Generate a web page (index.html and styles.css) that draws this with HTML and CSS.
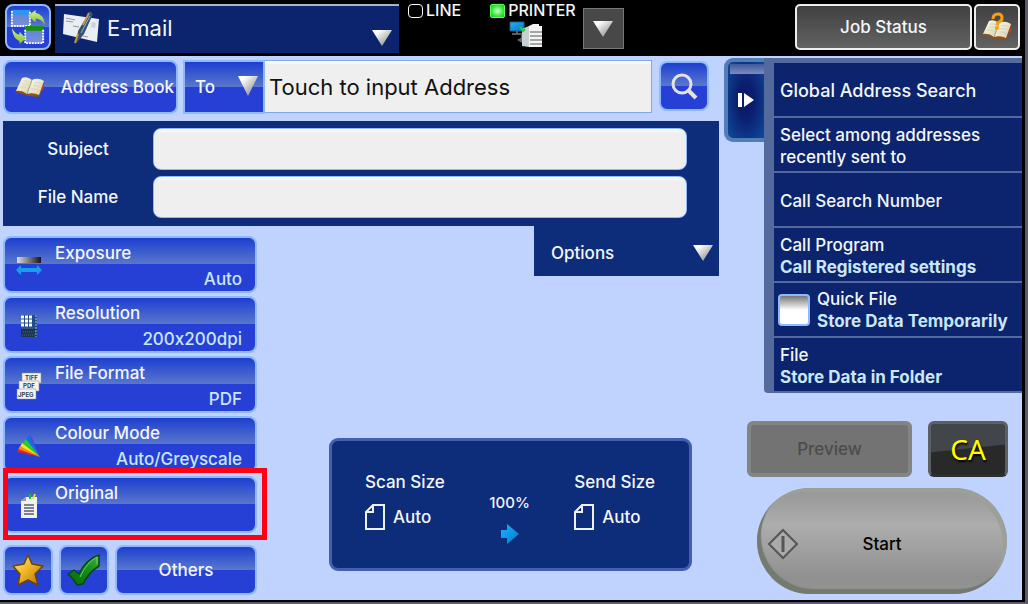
FILE: index.html
```html
<!DOCTYPE html>
<html lang="en">
<head>
    <meta charset="UTF-8">
    <meta name="viewport" content="width=device-width, initial-scale=1.0">
    <title>E-mail</title>
    <link rel="stylesheet" href="styles.css">
</head>
<body>

    <!-- Shared shapes -->
    <svg class="defs" width="0" height="0" aria-hidden="true">
        <defs>
            <linearGradient id="silver" x1="0" y1="0" x2="1" y2="1">
                <stop offset="0.2" stop-color="#fff"/>
                <stop offset="0.8" stop-color="#999"/>
            </linearGradient>
            <linearGradient id="paper" x1="0" y1="0" x2="1" y2="1">
                <stop offset="0" stop-color="#fffef0"/>
                <stop offset="1" stop-color="#d4ceaa"/>
            </linearGradient>
            <linearGradient id="cyan" x1="0" y1="0" x2="1" y2="1">
                <stop offset="0" stop-color="#19b4ff"/>
                <stop offset="1" stop-color="#0678cc"/>
            </linearGradient>
            <linearGradient id="leaf" x1="0" y1="0" x2="0" y2="1">
                <stop offset="0" stop-color="#d8f08a"/>
                <stop offset="1" stop-color="#7cc436"/>
            </linearGradient>
            <linearGradient id="gold" x1="0" y1="0" x2="1" y2="1">
                <stop offset="0" stop-color="#ffe9a0"/>
                <stop offset="0.45" stop-color="#f3b928"/>
                <stop offset="1" stop-color="#b06c00"/>
            </linearGradient>
            <linearGradient id="green" x1="1" y1="0" x2="0" y2="1">
                <stop offset="0" stop-color="#3fb53f"/>
                <stop offset="0.4" stop-color="#12901c"/>
                <stop offset="1" stop-color="#07660d"/>
            </linearGradient>
            <linearGradient id="ramp" x1="0" y1="0" x2="1" y2="0">
                <stop offset="0" stop-color="#ddd"/>
                <stop offset="1" stop-color="#151515"/>
            </linearGradient>
            <linearGradient id="glass" x1="0" y1="0" x2="0" y2="1">
                <stop offset="0" stop-color="#5a83dc"/>
                <stop offset="1" stop-color="#7b8fd6"/>
            </linearGradient>
            <symbol id="arrow-down" viewBox="0 0 20 16">
                <path d="M0 0H20L10 16Z" fill="url(#silver)"/>
            </symbol>
            <symbol id="book" viewBox="0 0 30 20">
                <path d="M1 13L0 15L14 19L24 20L29 9V5Z" fill="#8b501b"/>
                <path d="M7 1Q12 -1 17 3L12 17Q7 13 1 14Z" fill="url(#paper)"/>
                <path d="M17 3Q23 0 29 4L24 18Q18 15 12 17Z" fill="url(#paper)"/>
                <path d="M8 4Q12 3 15 6M7 7Q11 6 14 9M5 10Q9 9 13 12M19 6Q23 4 27 7M18 9Q22 7 26 10M16 12Q20 11 25 14" fill="none" stroke="#d3cfb4" stroke-width="0.7"/>
                <path d="M17 3L12 17" stroke="#aaa482"/>
                <path d="M27 13L29 8" stroke="#d03a22" stroke-width="1.5"/>
            </symbol>
            <symbol id="sheet" viewBox="0 0 20 26">
                <path d="M1 8V25H19V1H8Z M8 1V8H1" fill="none" stroke="#f1f1ec" stroke-width="2"/>
            </symbol>
        </defs>
    </svg>

    <!-- Top bar -->
    <header class="topbar">
        <button class="btn btn-swap" type="button" aria-label="Switch mode">
            <svg width="36" height="36" viewBox="0 0 38 38">
                <path d="M2 2H21V18H2Z" fill="url(#glass)"/>
                <path d="M2 1H21V6H2Z" fill="#2f96ee"/>
                <path d="M2 2V18H21V2" fill="none" stroke="#fff" stroke-width="2" stroke-dasharray="2 1"/>
                <path d="M16 19H35V36H16Z" fill="url(#glass)"/>
                <path d="M16 18H35V23H16Z" fill="#15910e"/>
                <path d="M16 22V36H35V21" fill="none" stroke="#fff" stroke-width="2" stroke-dasharray="2 1"/>
                <path d="M19 7L27 1V4Q36 6 37 17Q33 10 27 10V14Z" fill="url(#leaf)"/>
                <path d="M17 31L10 37V34Q3 31 2 20Q6 27 10 27V24Z" fill="url(#leaf)"/>
            </svg>
        </button>
        <div class="mode">
            <svg class="mode-icon" width="38" height="36" viewBox="0 0 38 36">
                <path d="M2 4L37 9L35 32L1 24Z" fill="#e9edf4"/>
                <path d="M4 8L13 10M4 11L11 12M11 16L17 17M21 26L26 27" stroke="#999" stroke-width="1"/>
                <path d="M30 12L34 13L33 18L29 17Z" fill="#cdd3de"/>
                <path d="M28 1L31 4L22 24L14 34L16 21Z" fill="#34516f"/>
                <path d="M27 3L21 15M16 24L13 33" stroke="#c79a4a" stroke-width="2"/>
                <path d="M28 6L19 23" stroke="#9cb3c6" stroke-width="1"/>
            </svg>
            <select class="mode-select" aria-label="Mode">
                <option>E-mail</option>
            </select>
            <svg class="mode-arrow" width="20" height="16"><use href="#arrow-down"/></svg>
        </div>
        <div class="status">
            <div class="status-leds">
                <span class="led"></span>LINE
                <span class="led led-on"></span>PRINTER
            </div>
            <svg class="status-icon" width="34" height="27" viewBox="0 0 34 27">
                <path d="M1 1H15V10H1Z" fill="url(#cyan)" stroke="#315b79"/>
                <path d="M8 10V13M3 13H13M13 14V20" stroke="#777" stroke-width="1.5"/>
                <path d="M8 19L15 15V23Z" fill="#666"/>
                <path d="M13 8L20 5V26L13 25Z" fill="#c9d0d4"/>
                <path d="M11 6L14 10L16 8" fill="none" stroke="#1ed626" stroke-width="2"/>
                <path d="M20 5L24 3H30V5H33V26H20Z" fill="#f4f4f4"/>
                <path d="M21 11H33M21 15H33M21 19H33M21 23H33" stroke="#555" stroke-width="1"/>
            </svg>
        </div>
        <button class="btn-status-more" type="button" aria-label="Status details">
            <svg width="20" height="16"><use href="#arrow-down"/></svg>
        </button>
        <button class="btn-dark job-status" type="button">Job Status</button>
        <button class="btn-dark help" type="button" aria-label="Help">
            <svg width="32" height="30" viewBox="0 0 32 30">
                <use href="#book" x="1" y="8" width="30" height="20"/>
                <path d="M12 7Q12 2 17 2Q21 2 21 6Q21 9 18 10Q16 11 16 13" fill="none" stroke="#f5a013" stroke-width="3"/>
                <circle cx="16" cy="16" r="2" fill="#f5a013"/>
            </svg>
        </button>
    </header>

    <main class="screen">

        <!-- Send form and scan settings -->
        <section class="send">
            <div class="address-row">
                <button class="btn address-book" type="button">
                    <svg width="30" height="20"><use href="#book"/></svg>
                    Address Book
                </button>
                <div class="address">
                    <div class="to">
                        <select class="btn to-select" aria-label="Recipient type">
                            <option>To</option>
                        </select>
                        <svg class="to-arrow" width="20" height="20" viewBox="0 0 20 20"><path d="M0 0H20L10 20Z" fill="url(#silver)"/></svg>
                    </div>
                    <input class="address-input" type="text" placeholder="Touch to input Address" aria-label="Address">
                </div>
                <button class="btn search" type="button" aria-label="Search">
                    <svg width="28" height="28" viewBox="0 0 28 28" fill="none" stroke="#e2e2e2">
                        <circle cx="12" cy="12" r="9" stroke-width="3"/>
                        <path d="M18 18L26 26" stroke-width="4"/>
                    </svg>
                </button>
            </div>

            <div class="fields">
                <label for="subject">Subject</label>
                <input id="subject" type="text">
                <label for="filename">File Name</label>
                <input id="filename" type="text">
            </div>

            <div class="lower">
                <div class="settings">
                    <button class="btn setting" type="button">
                        <svg width="26" height="20" viewBox="0 0 26 20">
                            <path d="M1 1H25V7H1Z" fill="url(#ramp)"/>
                            <path d="M0 14L5 9V12H21V9L26 14L21 19V16H5V19Z" fill="#16a0ec"/>
                        </svg>
                        <span class="setting-name">Exposure</span>
                        <span class="setting-value">Auto</span>
                    </button>
                    <button class="btn setting" type="button">
                        <svg width="26" height="24" viewBox="0 0 26 24">
                            <path d="M5 1H21V23H5Z" fill="#244c8b"/>
                            <path d="M5 15H21V23H5Z" fill="#1d344d"/>
                            <path d="M5 3H17M5 7H17M5 11H17" stroke="#fff" stroke-width="3" stroke-dasharray="3 1"/>
                            <path d="M6 14H18M7 18H20M6 21H20" stroke="#3f6c90" stroke-dasharray="1 1"/>
                            <path d="M20 1V23" stroke="#8fbdf2" stroke-dasharray="2 1"/>
                        </svg>
                        <span class="setting-name">Resolution</span>
                        <span class="setting-value">200x200dpi</span>
                    </button>
                    <button class="btn setting" type="button">
                        <svg width="26" height="28" viewBox="0 0 26 28">
                            <g fill="#f4f4ec" stroke="#8291a0" stroke-width="0.5">
                                <path d="M6 1H25V11H6Z"/><path d="M3 9H23V19H3Z"/><path d="M1 17H20V27H1Z"/>
                            </g>
                            <g class="format-text">
                                <text x="9" y="8">TIFF</text><text x="7" y="16">PDF</text><text x="2" y="25">JPEG</text>
                            </g>
                        </svg>
                        <span class="setting-name">File Format</span>
                        <span class="setting-value">PDF</span>
                    </button>
                    <button class="btn setting" type="button">
                        <svg width="26" height="24" viewBox="0 0 26 24">
                            <path d="M13 1L16 4L24 23Z" fill="#6d28e0"/>
                            <path d="M13 1L24 23L9 7Z" fill="#0f6ee8"/>
                            <path d="M10 5L24 23L6 10Z" fill="#26c935"/>
                            <path d="M6 9L24 23L4 13Z" fill="#f5e51c"/>
                            <path d="M4 12L24 23L2 16Z" fill="#f58a14"/>
                            <path d="M2 15L24 23L1 18Z" fill="#e02128"/>
                        </svg>
                        <span class="setting-name">Colour Mode</span>
                        <span class="setting-value">Auto/Greyscale</span>
                    </button>
                    <div class="highlighted">
                        <button class="btn setting" type="button">
                            <svg width="26" height="26" viewBox="0 0 26 26">
                                <path d="M5 8L10 4H21V25H5Z" fill="#f1f1ef"/>
                                <path d="M5 8H10V4Z" fill="#999"/>
                                <path d="M8 12H18M8 15H18M8 18H18M8 21H18" stroke="#555f6c" stroke-width="1.5"/>
                                <path d="M14 1V6" stroke="#17c322" stroke-width="2"/>
                                <path d="M19 1L17 6" stroke="#eae021" stroke-width="2"/>
                            </svg>
                            <span class="setting-name">Original</span>
                        </button>
                    </div>
                    <div class="shortcuts">
                        <button class="btn shortcut" type="button" aria-label="Favourites">
                            <svg width="32" height="34" viewBox="0 0 32 34"><path d="M16 2L20 11L31 13L23 21L26 32L16 27L6 32L8 21L1 13L12 11Z" fill="url(#gold)" stroke="#6b4508" stroke-width="1.5" stroke-linejoin="round"/></svg>
                        </button>
                        <button class="btn shortcut" type="button" aria-label="Confirm settings">
                            <svg width="34" height="34" viewBox="0 0 34 34"><path d="M1 21L7 17L12 21Q19 6 32 2V13Q22 19 16 31L10 32Q6 25 1 21Z" fill="url(#green)" stroke="#07480c" stroke-width="1.5" stroke-linejoin="round"/><path d="M13 24Q20 9 30 4V11" fill="none" stroke="#6fce6f" stroke-width="1"/></svg>
                        </button>
                        <button class="btn others" type="button">Others</button>
                    </div>
                </div>

                <div class="middle">
                    <button class="options" type="button" aria-expanded="false">
                        Options
                        <svg width="20" height="16"><use href="#arrow-down"/></svg>
                    </button>
                    <div class="sizes">
                        <div class="size">
                            <span>Scan Size</span>
                            <span class="size-value"><svg width="20" height="26"><use href="#sheet"/></svg>Auto</span>
                        </div>
                        <div class="ratio">
                            <span>100%</span>
                            <svg width="18" height="20" viewBox="0 0 18 20"><path d="M0 6H6V0L18 10L6 20V14H0Z" fill="url(#cyan)"/></svg>
                        </div>
                        <div class="size">
                            <span>Send Size</span>
                            <span class="size-value"><svg width="20" height="26"><use href="#sheet"/></svg>Auto</span>
                        </div>
                    </div>
                </div>
            </div>
        </section>

        <!-- Action drawer and start keys -->
        <aside class="side">
            <div class="drawer">
                <button class="handle" type="button" aria-label="Collapse">
                    <svg width="16" height="14" viewBox="0 0 16 14" fill="#fff"><path d="M0 0H4V14H0ZM6 0L16 7L6 14Z"/></svg>
                </button>
                <ul class="actions">
                    <li><button class="action action-main" type="button">Global Address Search</button></li>
                    <li><button class="action" type="button">Select among addresses recently sent to</button></li>
                    <li><button class="action" type="button">Call Search Number</button></li>
                    <li><button class="action" type="button">Call Program<small>Call Registered settings</small></button></li>
                    <li>
                        <label class="action action-check">
                            <input type="checkbox">
                            <span>Quick File<small>Store Data Temporarily</small></span>
                        </label>
                    </li>
                    <li><button class="action" type="button">File<small>Store Data in Folder</small></button></li>
                </ul>
            </div>
            <div class="keys">
                <div class="keys-row">
                    <button class="preview" type="button" disabled>Preview</button>
                    <button class="clear" type="button">CA</button>
                </div>
                <button class="start" type="button">
                    <svg width="32" height="32" viewBox="0 0 32 32" fill="none" stroke="#555">
                        <path d="M16 2L30 16L16 30L2 16Z" fill="#aaa" stroke-width="2"/>
                        <path d="M16 8V24" stroke-width="3"/>
                    </svg>
                    <span>Start</span>
                </button>
            </div>
        </aside>
    </main>

</body>
</html>
```

FILE: styles.css
```css
/* Reset and Basic Styles */
* {
    margin: 0;
    padding: 0;
    box-sizing: border-box;
}
body {
    min-height: 100vh;
    display: flex;
    flex-direction: column;
    font-family: Inter, "Liberation Sans", sans-serif;
    font-size: 17px;
    font-weight: 500;
    line-height: 22px;
    font-variant-ligatures: none;
    color: #f4f6f8;
    background-color: #c0d3ff;
    border-right: 3px solid #5c5a6c;
    border-bottom: 2px solid #5c5a6c;
}
button,
input,
select {
    font: inherit;
    font-variant-ligatures: none;
    color: inherit;
    border: none;
}
button,
select {
    cursor: pointer;
}
svg {
    display: block;
    flex-shrink: 0;
}
ul {
    list-style: none;
}
.defs {
    position: absolute;
}

/* Glossy blue button */
.btn {
    border: 2px solid #8fb9ff;
    border-radius: 8px;
    background: linear-gradient(#1d3fd0 0%, #5a78cd 50%, #2640d6 50%);
    white-space: nowrap;
}

/* Top bar */
.topbar {
    display: flex;
    align-items: flex-start;
    height: 56px;
    padding: 4px 5px;
    background-color: #000;
}
.btn-swap {
    display: grid;
    place-items: center;
    width: 46px;
    height: 46px;
}
.mode {
    position: relative;
    flex: 344 1 0;
    max-width: 344px;
    margin-left: 4px;
}
.mode-select {
    appearance: none;
    display: block;
    width: 100%;
    height: 49px;
    padding: 0 0 4px 52px;
    font-size: 22px;
    font-weight: 400;
    background-color: #0b246d;
    border-top: 2px solid #a9b2cf;
}
.mode-icon {
    position: absolute;
    left: 7px;
    top: 6px;
}
.mode-arrow {
    position: absolute;
    right: 7px;
    bottom: 7px;
    pointer-events: none;
}
.status {
    margin: -4px 0 0 9px;
    font-size: 16px;
    line-height: 21px;
}
.status-leds {
    display: flex;
    align-items: center;
    gap: 3px;
}
.led {
    width: 15px;
    height: 14px;
    border: 1px solid #fff;
    border-radius: 4px;
}
.led-on {
    margin-left: 26px;
    background: radial-gradient(#d4ffd0, #38e83b 60%, #12c51c);
    border-color: #5dff5d;
    border-radius: 2px;
}
.status-icon {
    margin-left: 101px;
}
.btn-status-more {
    display: grid;
    place-items: center;
    width: 41px;
    height: 41px;
    margin: 4px 0 0 7px;
    background-color: #484848;
    border: 1px solid #777;
}
.btn-dark {
    height: 46px;
    border: 2px solid #eee;
    border-radius: 5px;
    background: linear-gradient(#404040, #636363);
}
.job-status {
    width: 177px;
    margin-left: auto;
}
.help {
    display: grid;
    place-items: center;
    width: 46px;
    margin-left: 2px;
}

/* Main layout */
.screen {
    flex: 1;
    display: grid;
    grid-template-columns: minmax(0, 1fr) 298px;
    gap: 5px;
    border-right: 3px solid #000;
    border-bottom: 2px solid #000;
}
.send {
    display: flex;
    flex-direction: column;
    padding: 4px 0 5px 3px;
}

/* Address row */
.address-row {
    display: flex;
    align-items: flex-start;
    gap: 5px;
}
.address-book {
    display: flex;
    align-items: center;
    justify-content: space-between;
    width: 175px;
    height: 54px;
    padding: 0 2px 0 10px;
}
.address {
    display: flex;
    flex: 1;
}
.to {
    position: relative;
    width: 82px;
}
.to-select {
    appearance: none;
    display: block;
    width: 100%;
    height: 54px;
    padding-left: 10px;
    border-radius: 0;
}
.to-arrow {
    position: absolute;
    right: 7px;
    top: 16px;
    pointer-events: none;
}
.address-input {
    flex: 1;
    min-width: 0;
    height: 53px;
    padding-left: 4px;
    font-size: 22px;
    font-weight: 400;
    color: #111;
    background: linear-gradient(#fff, #efefef 4px);
    border: 1px solid #7fa8ea;
    border-left: none;
}
.address-input::placeholder {
    color: #111;
    opacity: 1;
}
.search {
    display: grid;
    place-items: center;
    width: 50px;
    height: 50px;
    margin: 1px 10px 0 2px;
}

/* Subject and file name */
.fields {
    display: grid;
    grid-template-columns: 150px 1fr;
    align-items: center;
    gap: 6px 0;
    margin-top: 7px;
    padding: 7px 32px 8px 0;
    background-color: #0d2c7a;
}
.fields label {
    text-align: center;
}
.fields input {
    height: 42px;
    padding: 0 8px;
    color: #111;
    background: linear-gradient(#fff, #efefef 4px);
    border: 1px solid #8fb9ff;
    border-radius: 8px;
}

/* Settings list */
.lower {
    flex: 1;
    display: flex;
}
.settings {
    display: flex;
    flex-direction: column;
    gap: 3px;
    width: 254px;
    padding-top: 10px;
}
.setting {
    display: grid;
    grid-template-columns: 26px 1fr;
    grid-template-rows: 26px 25px;
    align-items: center;
    column-gap: 13px;
    width: 100%;
    height: 57px;
    padding: 2px 13px 0 11px;
    text-align: left;
}
.setting svg {
    grid-row: 1 / 3;
}
.setting-value {
    text-align: right;
    color: #cbe6f5;
}
.format-text {
    font-size: 6px;
    font-weight: 700;
    fill: #333f4c;
}

/* Red frame round the setting */
.highlighted {
    position: relative;
}
.highlighted::after {
    content: '';
    position: absolute;
    inset: -8px -10px -7px 0;
    border: 5px solid #ff0015;
    pointer-events: none;
}
.shortcuts {
    display: flex;
    gap: 6px;
    margin-top: 9px;
}
.shortcut {
    display: grid;
    place-items: center;
    width: 50px;
    height: 50px;
}
.others {
    flex: 1;
    height: 50px;
}

/* Options and sizes */
.middle {
    flex: 1;
    display: flex;
    flex-direction: column;
    justify-content: space-between;
}
.options {
    align-self: flex-end;
    display: flex;
    align-items: center;
    justify-content: space-between;
    width: 185px;
    height: 50px;
    padding: 4px 6px 0 17px;
    background-color: #0d2c7a;
}
.sizes {
    display: flex;
    align-items: flex-start;
    justify-content: space-between;
    height: 133px;
    margin: 0 27px 24px 72px;
    padding: 30px 34px 0 33px;
    background-color: #0d2c7a;
    border: 3px solid #425fb0;
    border-radius: 9px;
}
.size-value {
    display: flex;
    align-items: center;
    gap: 8px;
    margin-top: 11px;
}
.ratio {
    display: flex;
    flex-direction: column;
    align-items: center;
    gap: 10px;
    padding-top: 21px;
    font-size: 15px;
}

/* Drawer */
.drawer {
    display: flex;
    align-items: flex-start;
    padding-top: 2px;
}
.handle {
    display: grid;
    place-items: center;
    width: 40px;
    height: 84px;
    border: 4px solid #527eb5;
    border-right: none;
    border-radius: 9px 0 0 9px;
    background:
        linear-gradient(#3f5a9d, #7d8cbd) 100% 2px / 34px 10px no-repeat,
        radial-gradient(#0b1c6c 30%, #0f4a9b);
}
.actions {
    flex: 1;
    padding: 5px 0 0 10px;
    background-color: #556a9c;
    border-bottom-left-radius: 4px;
}
.actions li {
    height: 55px;
    border-bottom: 2px solid #556a9c;
    background-color: #0b246d;
}
.action {
    display: flex;
    flex-direction: column;
    justify-content: center;
    width: 100%;
    height: 100%;
    padding: 2px 0 0 6px;
    text-align: left;
    background: none;
}
.action-main {
    font-size: 18px;
}
.action small {
    display: block;
    font-size: 17px;
    font-weight: 700;
    color: #cbe6f5;
}
.action-check {
    flex-direction: row;
    align-items: center;
    justify-content: flex-start;
    gap: 7px;
    padding: 0 0 0 4px;
    cursor: pointer;
}
.action-check input {
    appearance: none;
    width: 32px;
    height: 32px;
    border: 2px solid #8fb9ff;
    border-radius: 4px;
    background: linear-gradient(#777, #fff 50%);
}

/* Preview, clear all and start */
.keys {
    padding: 28px 14px 0 23px;
}
.keys-row {
    display: flex;
    justify-content: space-between;
}
.preview {
    width: 165px;
    height: 56px;
    color: #4c4c4c;
    background-color: #737373;
    border: 4px solid #838584;
    border-radius: 6px;
    cursor: default;
}
.clear {
    width: 80px;
    height: 56px;
    font-family: "Noto Sans", sans-serif;
    font-size: 28px;
    font-weight: 400;
    color: #ff0;
    text-shadow: 1px 2px 2px #000;
    background: linear-gradient(174deg, #42464a 48%, #292929 50%);
    border: 3px solid #5d6062;
    border-bottom-color: #2b302c;
    border-radius: 6px;
}
.start {
    display: grid;
    grid-template-columns: 32px 1fr 32px;
    align-items: center;
    width: 250px;
    height: 106px;
    margin: 11px 0 0 10px;
    padding: 6px 10px 0;
    color: #000;
    background: linear-gradient(#969696, #adadad 35%, #909090 85%, #949494);
    border-radius: 53px;
    box-shadow: inset 4px -5px 1px #757a71, inset -4px 4px 1px #9da098;
}
```
